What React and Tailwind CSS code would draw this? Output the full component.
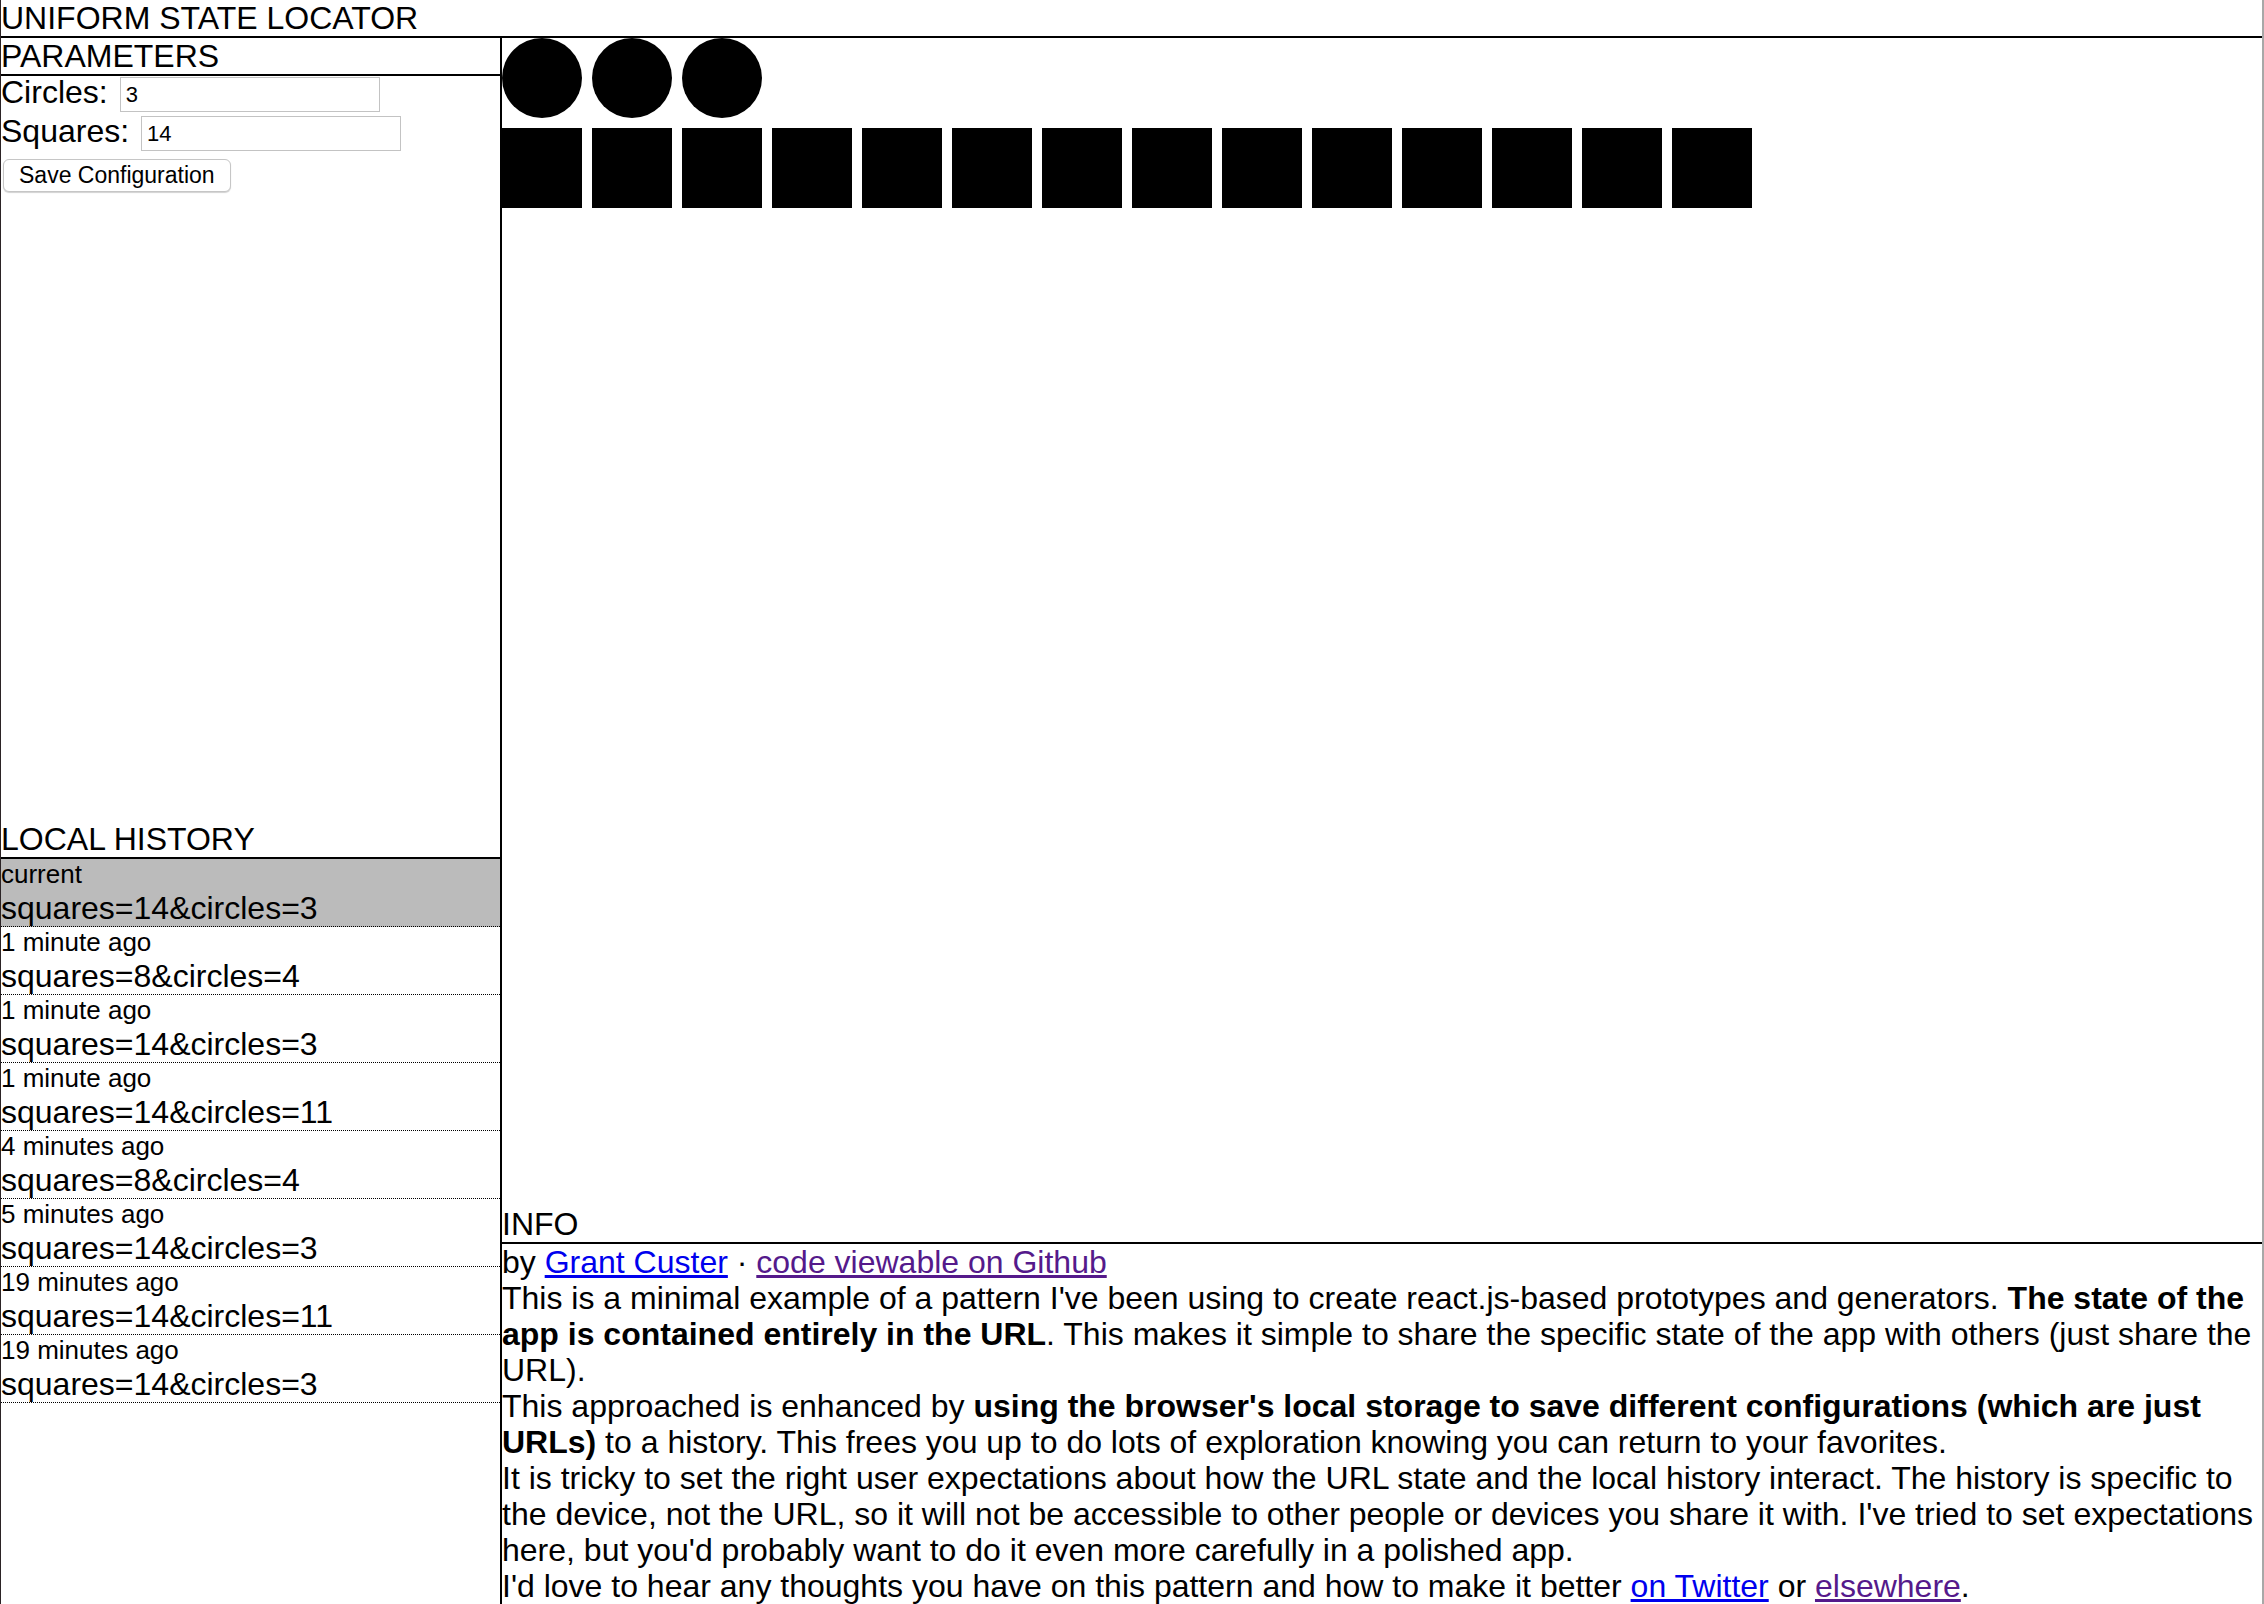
import { useState } from 'react';

const history = [
  { when: 'current', query: 'squares=14&circles=3', current: true },
  { when: '1 minute ago', query: 'squares=8&circles=4' },
  { when: '1 minute ago', query: 'squares=14&circles=3' },
  { when: '1 minute ago', query: 'squares=14&circles=11' },
  { when: '4 minutes ago', query: 'squares=8&circles=4' },
  { when: '5 minutes ago', query: 'squares=14&circles=3' },
  { when: '19 minutes ago', query: 'squares=14&circles=11' },
  { when: '19 minutes ago', query: 'squares=14&circles=3' },
];

export default function App() {
  const [circles, setCircles] = useState('3');
  const [squares, setSquares] = useState('14');

  const circleCount = parseInt(circles) || 0;
  const squareCount = parseInt(squares) || 0;

  return (
    <div className="h-screen flex flex-col overflow-hidden bg-white text-black font-['Liberation_Sans',Arial,sans-serif] text-[32px] leading-[36px] border-l border-l-[#2b2325] border-r-2 border-r-[#a8a8a8]">
      <div className="border-b-2 border-black h-[38px]">UNIFORM STATE LOCATOR</div>

      <div className="flex flex-1 min-h-0">
        {/* left column */}
        <div className="w-[501px] shrink-0 border-r-2 border-black flex flex-col">
          <div className="flex-1 min-h-0">
            <div className="border-b-2 border-black h-[38px]">PARAMETERS</div>

            <div className="flex items-start h-[39px]">
              <span className="-mt-[2px]">Circles:</span>
              <input
                value={circles}
                onChange={(e) => setCircles(e.target.value)}
                className="ml-[12px] mt-[1px] w-[260px] h-[35px] border border-[#c3c3c3] pl-[5px] text-[22px] outline-none font-['Liberation_Sans',Arial,sans-serif]"
              />
            </div>
            <div className="flex items-start h-[39px]">
              <span className="-mt-[2px]">Squares:</span>
              <input
                value={squares}
                onChange={(e) => setSquares(e.target.value)}
                className="ml-[12px] mt-[1px] w-[260px] h-[35px] border border-[#c3c3c3] pl-[5px] text-[22px] outline-none font-['Liberation_Sans',Arial,sans-serif]"
              />
            </div>
            <button className="ml-[2px] h-[33px] px-[15px] text-[23px] leading-none rounded-[6px] border border-[#c6c6c6] bg-white shadow-[0_1px_1px_rgba(0,0,0,0.18)]">
              Save Configuration
            </button>
          </div>

          <div className="flex-1 min-h-0">
            <div className="border-b-2 border-black h-[38px]">LOCAL HISTORY</div>
            {history.map((h, i) => (
              <div
                key={i}
                className={`border-b border-dotted border-black ${h.current ? 'bg-[#bbbbbb]' : ''}`}
              >
                <div className="text-[26px] leading-[31px]">{h.when}</div>
                <div className="leading-[36px]">{h.query}</div>
              </div>
            ))}
          </div>
        </div>

        {/* main area */}
        <div className="flex-1 min-w-0 flex flex-col">
          <div className="flex-1 min-h-0">
            <div className="flex gap-[10px]">
              {Array.from({ length: circleCount }).map((_, i) => (
                <div key={i} className="w-[80px] h-[80px] rounded-full bg-black" />
              ))}
            </div>
            <div className="flex gap-[10px] mt-[10px]">
              {Array.from({ length: squareCount }).map((_, i) => (
                <div key={i} className="w-[80px] h-[80px] bg-black" />
              ))}
            </div>
          </div>

          <div>
            <div className="border-b-2 border-black h-[38px]">INFO</div>
            <div>
              by{' '}
              <a href="#" className="underline text-[#0000ee]">Grant Custer</a>
              {' · '}
              <a href="#" className="underline text-[#551a8b]">code viewable on Github</a>
            </div>
            <p>
              This is a minimal example of a pattern I've been using to create react.js-based
              prototypes and generators.{' '}
              <strong>The state of the app is contained entirely in the URL</strong>. This makes
              it simple to share the specific state of the app with others (just share the URL).
            </p>
            <p>
              This approached is enhanced by{' '}
              <strong>
                using the browser's local storage to save different configurations (which are
                just URLs)
              </strong>{' '}
              to a history. This frees you up to do lots of exploration knowing you can return to
              your favorites.
            </p>
            <p>
              It is tricky to set the right user expectations about how the URL state and the
              local history interact. The history is specific to the device, not the URL, so it
              will not be accessible to other people or devices you share it with. I've tried to
              set expectations here, but you'd probably want to do it even more carefully in a
              polished app.
            </p>
            <p>
              I'd love to hear any thoughts you have on this pattern and how to make it better{' '}
              <a href="#" className="underline text-[#0000ee]">on Twitter</a> or{' '}
              <a href="#" className="underline text-[#551a8b]">elsewhere</a>.
            </p>
          </div>
        </div>
      </div>
    </div>
  );
}
